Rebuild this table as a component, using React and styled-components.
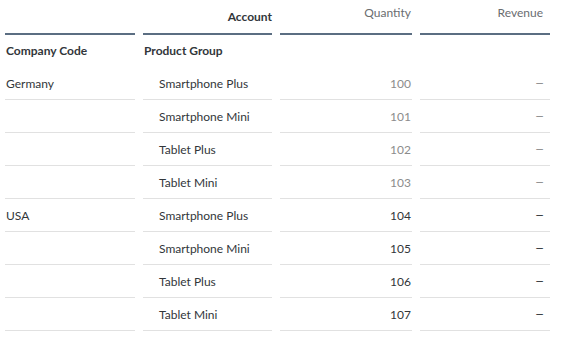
import styled, { createGlobalStyle, css } from "styled-components";

const GlobalStyle = createGlobalStyle`
  body {
    margin: 0;
    background: #ffffff;
    font-family: Lato, "Liberation Sans", Arial, sans-serif;
  }
`;

const rows = [
  { company: "Germany", product: "Smartphone Plus", quantity: 100, muted: true },
  { company: "", product: "Smartphone Mini", quantity: 101, muted: true },
  { company: "", product: "Tablet Plus", quantity: 102, muted: true },
  { company: "", product: "Tablet Mini", quantity: 103, muted: true },
  { company: "USA", product: "Smartphone Plus", quantity: 104, muted: false },
  { company: "", product: "Smartphone Mini", quantity: 105, muted: false },
  { company: "", product: "Tablet Plus", quantity: 106, muted: false },
  { company: "", product: "Tablet Mini", quantity: 107, muted: false },
];

export default function App() {
  return (
    <>
      <GlobalStyle />
      <Table>
        <HeadCell />
        <HeadCell align="right" bold>
          Account
        </HeadCell>
        <HeadCell align="right" top pad="1px">
          Quantity
        </HeadCell>
        <HeadCell align="right" top pad="7px">
          Revenue
        </HeadCell>

        <DimCell bold>Company Code</DimCell>
        <DimCell bold>Product Group</DimCell>
        <DimCell />
        <DimCell />

        {rows.map((row, i) => (
          <Row key={i}>
            <Cell>{row.company}</Cell>
            <Cell indent>{row.product}</Cell>
            <Cell align="right" pad="1px" muted={row.muted}>
              {row.quantity}
            </Cell>
            <Cell align="right" pad="7px" muted={row.muted}>
              <Dash>–</Dash>
            </Cell>
          </Row>
        ))}
      </Table>
    </>
  );
}

const Table = styled.div`
  display: grid;
  grid-template-columns: 130px 129px 132px 130px;
  column-gap: 8px;
  padding-left: 5px;
  font-size: 12px;
  color: #32363a;
`;

const Row = styled.div`
  display: contents;
`;

const HeadCell = styled.div`
  height: 33px;
  border-bottom: 2px solid #5b6e82;
  display: flex;
  align-items: center;
  justify-content: ${({ align }) => (align === "right" ? "flex-end" : "flex-start")};
  padding-right: ${({ pad }) => pad || "0"};
  font-weight: ${({ bold }) => (bold ? 700 : 400)};
  color: ${({ bold }) => (bold ? "#32363a" : "#6a6d70")};

  ${({ top }) =>
    top &&
    css`
      align-items: flex-start;
      padding-top: 5px;
      height: 28px;
    `};
`;

const DimCell = styled.div`
  height: 30px;
  padding-bottom: 2px;
  display: flex;
  align-items: center;
  padding-left: 1px;
  font-weight: ${({ bold }) => (bold ? 700 : 400)};
  color: #32363a;
`;

const Cell = styled.div`
  height: 32px;
  border-bottom: 1px solid #e1e1e1;
  display: flex;
  align-items: center;
  justify-content: ${({ align }) => (align === "right" ? "flex-end" : "flex-start")};
  padding-left: ${({ indent }) => (indent ? "16px" : "1px")};
  padding-right: ${({ pad }) => pad || "0"};
  color: ${({ muted }) => (muted ? "#8c8c8c" : "#32363a")};
`;

const Dash = styled.span`
  font-family: "Liberation Sans", Arial, sans-serif;
`;
